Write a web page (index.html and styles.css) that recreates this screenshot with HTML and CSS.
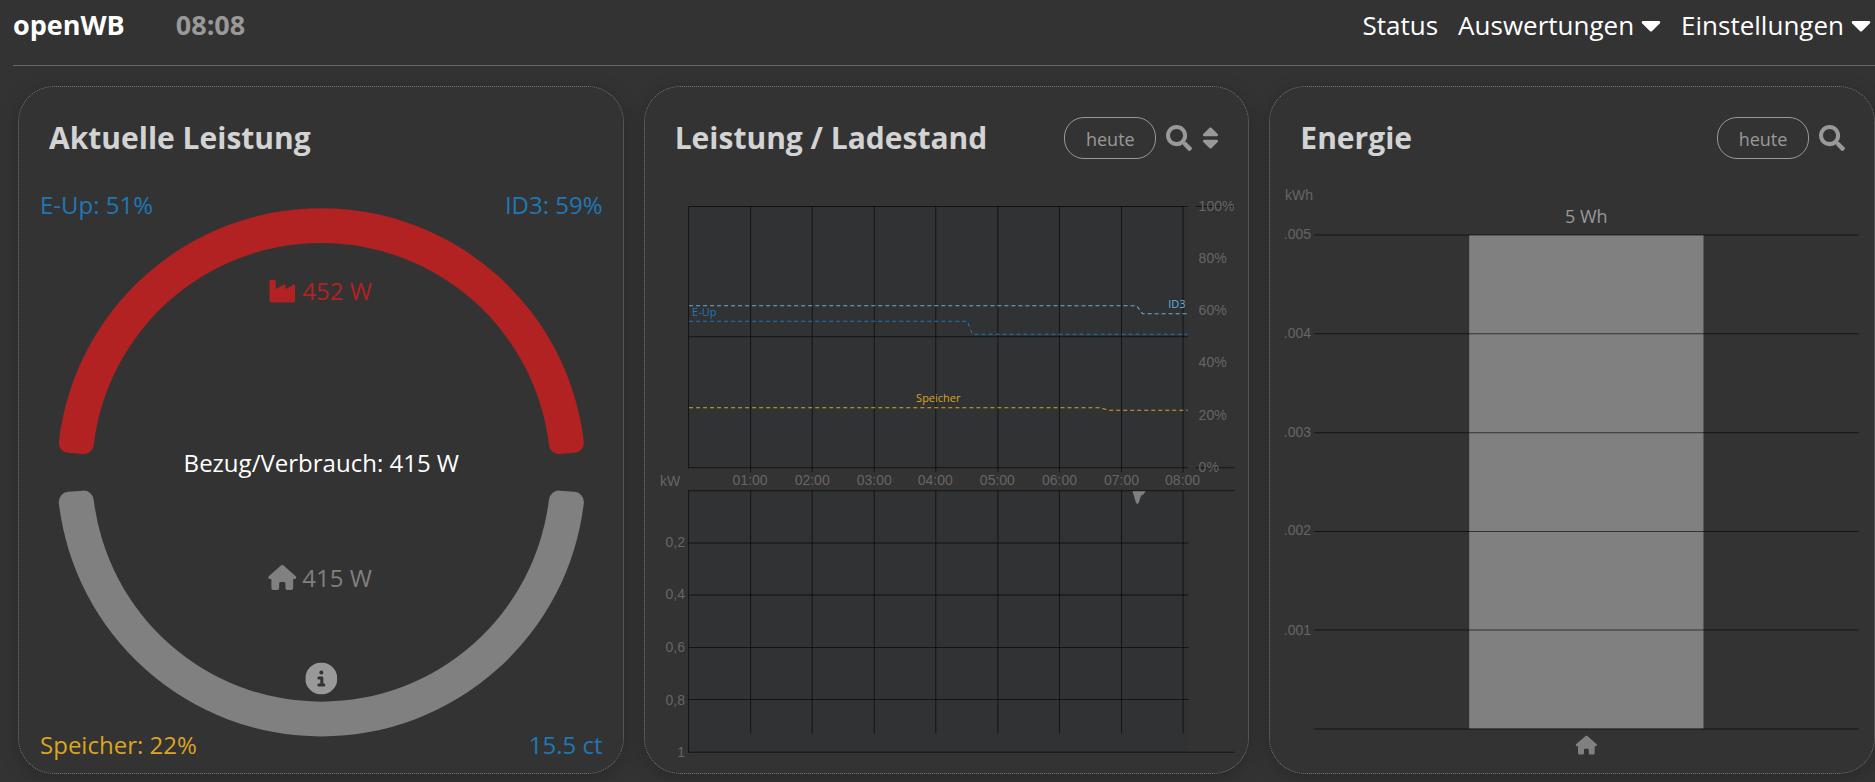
FILE: index.html
```html
<!DOCTYPE html>
<html lang="de">
<head>
    <meta charset="UTF-8">
    <meta name="viewport" content="width=device-width, initial-scale=1">
    <title>openWB</title>
    <link rel="stylesheet" href="styles.css">
</head>
<body>
<!-- Icons -->
<svg class="icon-defs" aria-hidden="true">
    <symbol id="icon-caret" viewBox="0 0 320 512">
        <path d="M31.3 192h257.3c17.8 0 26.7 21.5 14.1 34.1L174.1 354.8c-7.8 7.8-20.5 7.8-28.3 0L17.2 226.1C4.6 213.5 13.5 192 31.3 192z"/>
    </symbol>
    <symbol id="icon-search" viewBox="0 0 512 512">
        <path d="M505 442.7L405.3 343c-4.5-4.5-10.6-7-17-7H372c27.6-35.3 44-79.7 44-128C416 93.1 322.9 0 208 0S0 93.1 0 208s93.1 208 208 208c48.3 0 92.7-16.4 128-44v16.3c0 6.4 2.5 12.5 7 17l99.7 99.7c9.4 9.4 24.6 9.4 33.9 0l28.3-28.3c9.4-9.4 9.4-24.6.1-34zM208 336c-70.7 0-128-57.2-128-128 0-70.7 57.2-128 128-128 70.7 0 128 57.2 128 128 0 70.7-57.2 128-128 128z"/>
    </symbol>
    <symbol id="icon-sort" viewBox="0 0 320 512">
        <path d="M41 288h238c21.4 0 32.1 25.9 17 41L177 448c-9.4 9.4-24.6 9.4-33.9 0L24 329c-15.1-15.1-4.4-41 17-41zm255-105L177 64c-9.4-9.4-24.6-9.4-33.9 0L24 183c-15.1 15.1-4.4 41 17 41h238c21.4 0 32.1-25.9 17-41z"/>
    </symbol>
    <symbol id="icon-industry" viewBox="0 0 512 512">
        <path d="M32 32C14.3 32 0 46.3 0 64V432c0 26.5 21.5 48 48 48H464c26.5 0 48-21.5 48-48V152.2c0-18.2-19.4-29.7-35.4-21.1L320 215.4V152.2c0-18.2-19.4-29.7-35.4-21.1L128 215.4V64c0-17.7-14.3-32-32-32H32z"/>
    </symbol>
    <symbol id="icon-home" viewBox="0 0 576 512">
        <path d="M575.8 255.5c0 18-15 32.1-32 32.1h-32l.7 160.2c0 2.7-.2 5.4-.5 8.1V472c0 22.1-17.9 40-40 40H392c-22.1 0-40-17.9-40-40V384c0-17.7-14.3-32-32-32H256c-17.7 0-32 14.3-32 32v88c0 22.1-17.9 40-40 40H104c-22.1 0-40-17.9-40-40V287.6H32c-18 0-32-14-32-32.1c0-9 3-17 10-24L266.4 8c7-7 15-8 22-8s15 2 21 7L564.8 231.5c8 7 12 15 11 24z"/>
    </symbol>
    <symbol id="icon-info" viewBox="0 0 512 512">
        <path d="M256 512A256 256 0 1 0 256 0a256 256 0 1 0 0 512zM216 336h24V272H216c-13.3 0-24-10.7-24-24s10.7-24 24-24h48c13.3 0 24 10.7 24 24v88h8c13.3 0 24 10.7 24 24s-10.7 24-24 24H216c-13.3 0-24-10.7-24-24s10.7-24 24-24zm40-208a32 32 0 1 1 0 64 32 32 0 1 1 0-64z"/>
    </symbol>
</svg>

<header class="navbar">
    <a class="navbar-brand" href="#">openWB</a>
    <span class="navbar-time">08:08</span>
    <nav class="navbar-nav">
        <a class="nav-link" href="#">Status</a>
        <a class="nav-link" href="#">Auswertungen<svg class="caret"><use href="#icon-caret"/></svg></a>
        <a class="nav-link" href="#">Einstellungen<svg class="caret"><use href="#icon-caret"/></svg></a>
    </nav>
</header>

<main class="widgets">
    <!-- Aktuelle Leistung -->
    <section class="widget">
        <div class="widget-head">
            <h2 class="widget-title">Aktuelle Leistung</h2>
        </div>
        <svg class="chart" viewBox="0 0 603 580">
            <g transform="translate(302 292)">
                <path class="arc-source" d="M-262.2 -30.6A264 264 0 0 1 262.2 -30.6A10 10 0 0 1 253 -19.5L238.1 -18.3A10 10 0 0 1 227.4 -27.1A229 229 0 0 0 -227.4 -27.1A10 10 0 0 1 -238.1 -18.3L-253 -19.5A10 10 0 0 1 -262.2 -30.6Z"/>
                <path class="arc-usage" transform="scale(1 -1)" d="M-262.2 -30.6A264 264 0 0 1 262.2 -30.6A10 10 0 0 1 253 -19.5L238.1 -18.3A10 10 0 0 1 227.4 -27.1A229 229 0 0 0 -227.4 -27.1A10 10 0 0 1 -238.1 -18.3L-253 -19.5A10 10 0 0 1 -262.2 -30.6Z"/>
            </g>
            <text class="value blue" x="21" y="34">E-Up: 51%</text>
            <text class="value blue end" x="583" y="34">ID3: 59%</text>
            <use class="red" href="#icon-industry" x="250" y="98" width="26" height="26"/>
            <text class="value red" x="283" y="120">452 W</text>
            <text class="value white middle" x="302" y="292">Bezug/Verbrauch: 415 W</text>
            <use class="gray" href="#icon-home" x="249" y="384" width="28" height="26"/>
            <text class="value gray" x="283" y="407">415 W</text>
            <use class="light" href="#icon-info" x="286" y="482" width="32" height="32"/>
            <text class="value gold" x="21" y="573">Speicher: 22%</text>
            <text class="value blue end" x="583" y="573">15.5 ct</text>
        </svg>
    </section>

    <!-- Leistung / Ladestand -->
    <section class="widget">
        <div class="widget-head">
            <h2 class="widget-title">Leistung / Ladestand</h2>
            <div class="widget-tools">
                <button class="pill" type="button">heute</button>
                <button class="tool" type="button" aria-label="Zeitraum"><svg class="tool-icon"><use href="#icon-search"/></svg></button>
                <button class="tool" type="button" aria-label="Reihenfolge"><svg class="tool-icon narrow"><use href="#icon-sort"/></svg></button>
            </div>
        </div>
        <svg class="chart" viewBox="0 0 603 580">
            <rect class="plot" x="44" y="26" width="498" height="261"/>
            <rect class="plot" x="44" y="310" width="498" height="261"/>
            <path class="grid" d="M44 26.5H542M550 26.5H589M44 156.5H542M44 287.5H542M550 287.5H589M43.5 26V288"/>
            <path class="grid" d="M44 310.5H589M44 362.5H543M44 414.5H543M44 467H543M44 519H543M44 571.5H589M43.5 310V572"/>
            <path class="grid" d="M105.5 26V292M167 26V292M229 26V292M290.5 26V292M352.5 26V292M414 26V292M476 26V292M537.5 26V292"/>
            <path class="grid" d="M105.5 310V553M167 310V553M229 310V553M290.5 310V553M352.5 310V553M414 310V553M476 310V553M537.5 310V553"/>

            <path class="line line-id3" d="M44 125.5H491L497 133.5H542"/>
            <path class="line line-eup" d="M44 141H322L327 154H542"/>
            <path class="line line-bat" d="M44 227.5H454L464 230H542"/>
            <text class="series light-blue end" x="540" y="128">ID3</text>
            <text class="series blue" x="47" y="136">E-Up</text>
            <text class="series gold middle" x="293" y="222">Speicher</text>

            <text class="tick" x="553" y="31">100%</text>
            <text class="tick" x="553" y="83">80%</text>
            <text class="tick" x="553" y="135">60%</text>
            <text class="tick" x="553" y="187">40%</text>
            <text class="tick" x="553" y="240">20%</text>
            <text class="tick" x="553" y="292">0%</text>

            <text class="tick" x="15" y="306">kW</text>
            <text class="tick middle" x="105" y="305">01:00</text>
            <text class="tick middle" x="167" y="305">02:00</text>
            <text class="tick middle" x="229" y="305">03:00</text>
            <text class="tick middle" x="290" y="305">04:00</text>
            <text class="tick middle" x="352" y="305">05:00</text>
            <text class="tick middle" x="414" y="305">06:00</text>
            <text class="tick middle" x="476" y="305">07:00</text>
            <text class="tick middle" x="537" y="305">08:00</text>

            <text class="tick end" x="40" y="367">0,2</text>
            <text class="tick end" x="40" y="419">0,4</text>
            <text class="tick end" x="40" y="471">0,6</text>
            <text class="tick end" x="40" y="524">0,8</text>
            <text class="tick end" x="40" y="576">1</text>
            <path class="gray" d="M487 311H500L498 314L495.5 315.5L494 320Q492 327 490 321Z"/>
        </svg>
    </section>

    <!-- Energie -->
    <section class="widget">
        <div class="widget-head">
            <h2 class="widget-title">Energie</h2>
            <div class="widget-tools">
                <button class="pill" type="button">heute</button>
                <button class="tool" type="button" aria-label="Zeitraum"><svg class="tool-icon"><use href="#icon-search"/></svg></button>
            </div>
        </div>
        <svg class="chart" viewBox="0 0 603 580">
            <rect class="gray" x="199" y="55" width="234" height="493"/>
            <path class="grid" d="M44 55H588M44 153.5H588M44 252.5H588M44 351H588M44 449.5H588M44 548.5H588"/>
            <text class="tick" x="15" y="20">kWh</text>
            <text class="tick end" x="41" y="59">.005</text>
            <text class="tick end" x="41" y="158">.004</text>
            <text class="tick end" x="41" y="257">.003</text>
            <text class="tick end" x="41" y="355">.002</text>
            <text class="tick end" x="41" y="454">.001</text>
            <text class="bar-value light middle" x="316" y="43">5 Wh</text>
            <use class="gray" href="#icon-home" x="305" y="555" width="22" height="19"/>
        </svg>
    </section>
</main>
</body>
</html>
```
FILE: styles.css
```css
* {
    box-sizing: border-box;
}

body {
    margin: 0;
    background-color: #333;
    color: white;
    font-family: "Open Sans", "Noto Sans", sans-serif;
}

.icon-defs {
    display: none;
}

/* navbar */
.navbar {
    display: flex;
    align-items: center;
    height: 66px;
    margin-left: 13px;
    padding: 0 4px 16px 0;
    border-bottom: 1px solid #666;
    font-size: 26px;
}

.navbar a {
    color: white;
    text-decoration: none;
}

.navbar-brand,
.navbar-time {
    font-size: 27px;
    font-weight: bold;
}

.navbar-time {
    margin-left: 51px;
    color: #999;
}

.navbar-nav {
    display: flex;
    gap: 20px;
    margin-left: auto;
}

.nav-link {
    display: flex;
    align-items: center;
}

.caret {
    width: 20px;
    height: 32px;
    margin-left: 7px;
    fill: white;
}

/* widgets */
.widgets {
    display: grid;
    grid-template-columns: repeat(3, 1fr);
    gap: 20px;
    padding: 20px 0 8px 18px;
}

.widget {
    padding: 30px 0 12px;
    border: 1px dotted #777;
    border-radius: 36px;
    box-shadow: 0 4px 20px rgba(0, 0, 0, .2);
}

.widget-head {
    display: flex;
    align-items: center;
    justify-content: space-between;
    height: 42px;
    margin-bottom: 21px;
    padding: 0 29px 0 30px;
}

.widget-title {
    margin: 0;
    color: lightgray;
    font-size: 30px;
    line-height: 42px;
}

.widget-tools {
    display: flex;
    align-items: center;
    gap: 10px;
}

.pill {
    width: 92px;
    height: 42px;
    padding: 2px 0 0;
    border: 1px solid #999;
    border-radius: 20px;
    background: none;
    color: #999;
    font-family: inherit;
    font-size: 18px;
}

.tool {
    display: flex;
    padding: 0;
    border: 0;
    background: none;
}

.tool-icon {
    width: 26px;
    height: 26px;
    fill: #999;
}

.tool-icon.narrow {
    width: 17px;
    height: 28px;
}

/* charts */
.chart {
    display: block;
    width: 100%;
}

.value {
    font-size: 24px;
}

.series {
    font-size: 11px;
}

.bar-value {
    font-size: 18px;
}

.tick {
    fill: #666;
    font-family: "Liberation Sans", Arial, sans-serif;
    font-size: 14px;
}

.middle {
    text-anchor: middle;
}

.end {
    text-anchor: end;
}

.plot {
    fill: #313234;
}

.grid {
    fill: none;
    stroke: black;
    stroke-opacity: .6;
}

.line {
    fill: none;
    stroke-dasharray: 4 3;
}

.line-id3 {
    stroke: #6baed6;
}

.line-eup {
    stroke: #1f77b4;
}

.line-bat {
    stroke: goldenrod;
}

.arc-source,
.red {
    fill: #b22222;
}

.arc-usage,
.gray {
    fill: #808080;
}

.light {
    fill: #999;
}

.white {
    fill: white;
}

.blue {
    fill: #1f77b4;
}

.light-blue {
    fill: #6baed6;
}

.gold {
    fill: goldenrod;
}
```
